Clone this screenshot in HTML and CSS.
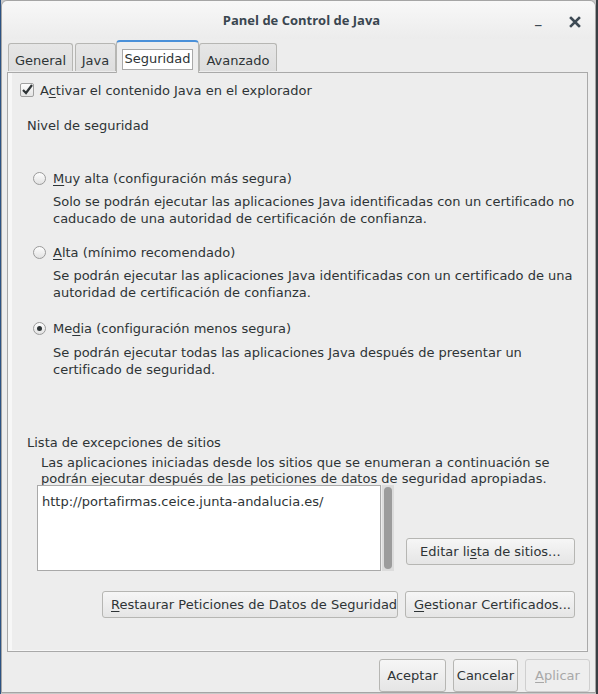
FILE: index.html
```html
<!DOCTYPE html>
<html lang="es">
<head>
<meta charset="utf-8">
<title>Panel de Control de Java</title>
<link rel="stylesheet" href="styles.css">
</head>
<body>
<div class="window">
  <div class="titlebar">
    <span class="title">Panel de Control de Java</span>
    <span class="wbtn min">_</span>
    <span class="wbtn close">
      <svg width="12" height="12" viewBox="0 0 12 12"><path d="M2 2 L10 10 M10 2 L2 10" stroke="#3d4a54" stroke-width="2.6" stroke-linecap="square"/></svg>
    </span>
  </div>
  <div class="body">
    <div class="tabs">
      <div class="tab t-general">General</div>
      <div class="tab t-java">Java</div>
      <div class="tab t-seg selected"><span class="focus">Seguridad</span></div>
      <div class="tab t-av">Avanzado</div>
    </div>
    <div class="panel">
      <div class="check-row">
        <span class="checkbox">
          <svg width="12" height="12" viewBox="0 0 12 12"><path d="M2 6 L5 9 L11 1" fill="none" stroke="#2e3436" stroke-width="2.2"/></svg>
        </span>
        <span>A<u>c</u>tivar el contenido Java en el explorador</span>
      </div>
      <div class="section-label">Nivel de seguridad</div>
      <div class="level first">
        <div class="radio-row"><span class="radio"></span><span><u>M</u>uy alta (configuración más segura)</span></div>
        <p class="desc">Solo se podrán ejecutar las aplicaciones Java identificadas con un certificado no caducado de una autoridad de certificación de confianza.</p>
      </div>
      <div class="level">
        <div class="radio-row"><span class="radio"></span><span><u>A</u>lta (mínimo recomendado)</span></div>
        <p class="desc">Se podrán ejecutar las aplicaciones Java identificadas con un certificado de una autoridad de certificación de confianza.</p>
      </div>
      <div class="level third">
        <div class="radio-row"><span class="radio checked"></span><span>Me<u>d</u>ia (configuración menos segura)</span></div>
        <p class="desc">Se podrán ejecutar todas las aplicaciones Java después de presentar un certificado de seguridad.</p>
      </div>
      <div class="section-label exc">Lista de excepciones de sitios</div>
      <p class="exc-desc">Las aplicaciones iniciadas desde los sitios que se enumeran a continuación se podrán ejecutar después de las peticiones de datos de seguridad apropiadas.</p>
      <div class="list-row">
        <div class="listbox">http://portafirmas.ceice.junta-andalucia.es/</div>
        <div class="scrollbar"><div class="thumb"></div></div>
        <button class="btn edit">Editar li<u>s</u>ta de sitios...</button>
      </div>
      <div class="actions">
        <button class="btn restore"><u>R</u>estaurar Peticiones de Datos de Seguridad</button>
        <button class="btn certs"><u>G</u>estionar Certificados...</button>
      </div>
    </div>
    <div class="footer">
      <button class="btn small b-ok">Aceptar</button>
      <button class="btn small">Cancelar</button>
      <button class="btn small disabled"><u>A</u>plicar</button>
    </div>
  </div>
</div>
</body>
</html>
```
FILE: styles.css
```css
* { box-sizing: border-box; }
html, body { margin: 0; padding: 0; }
body {
  width: 598px;
  height: 694px;
  background: linear-gradient(90deg, #2c5282 0, #2c5282 1px, #c8c8c8 1px, #c8c8c8 596px, #3a3f44 596px);
  font-family: "DejaVu Sans", sans-serif;
  font-size: 12px;
  color: #2e3436;
  overflow: hidden;
}
u { text-decoration: underline; text-underline-offset: 2px; }

.window {
  margin-left: 1px;
  width: 595px;
  height: 693px;
  background: #ededed;
  border: 1px solid #a5a5a5;
  border-radius: 6px 6px 0 0;
  display: flex;
  flex-direction: column;
}

.titlebar {
  height: 38px;
  flex: none;
  display: flex;
  align-items: center;
  justify-content: center;
  position: relative;
  background: linear-gradient(#f8f8f8, #ececec);
  border-radius: 6px 6px 0 0;
}
.title {
  font-family: "Open Sans", sans-serif;
  font-weight: 700;
  font-size: 13px;
  color: #3a4650;
  margin-left: 6px;
}
.wbtn {
  position: absolute;
  color: #3d4a54;
  font-weight: 700;
}
.wbtn.min { left: 533px; top: 10px; font-size: 13px; }
.wbtn.close { left: 567px; top: 15px; line-height: 0; }

.body {
  flex: 1;
  display: flex;
  flex-direction: column;
  padding: 1px 7px 0 5px;
}

.tabs {
  display: flex;
  align-items: flex-end;
  height: 32px;
  position: relative;
  z-index: 2;
}
.tab {
  height: 28px;
  border: 1px solid #b6b6b3;
  border-bottom: none;
  border-radius: 3px 3px 0 0;
  background: linear-gradient(#e6e6e6, #dedede);
  display: flex;
  align-items: center;
  justify-content: center;
  padding-top: 5px;
  font-size: 13px;
  margin-bottom: 1px;
}
.t-general { width: 65px; margin-left: 1px; }
.t-java { width: 41px; margin-left: 2px; }
.t-seg { width: 83px; }
.t-av { width: 78px; }
.tab.selected {
  height: 33px;
  margin-bottom: -1px;
  background: #ededed;
  border-top: 2px solid #4a90d9;
  padding-top: 3px;
  border-radius: 4px 4px 0 0;
}
.focus {
  border: 1px solid #a9a9a9;
  padding: 1px 1px 2px;
  background: #fff;
  line-height: 16px;
}

.panel {
  height: 580px;
  flex: none;
  border: 1px solid #a9a9a9;
  box-shadow: inset 4px 0 0 #f7f7f7, inset 0 -1px 0 #f7f7f7;
  background: #ededed;
  padding: 7px 12px 0 12px;
  display: flex;
  flex-direction: column;
  position: relative;
  z-index: 1;
}

.check-row {
  display: flex;
  align-items: center;
  gap: 6px;
  font-size: 13px;
  height: 20px;
}
.checkbox {
  width: 14px;
  height: 14px;
  border: 1px solid #a0a0a0;
  border-radius: 2px;
  background: linear-gradient(#fdfdfd, #e4e4e4);
  display: flex;
  align-items: center;
  justify-content: center;
}

.section-label {
  font-size: 13px;
  margin: 17px 0 0 7px;
  line-height: 18px;
}
.section-label.exc { margin-top: 56px; }

.level { margin: 16px 0 0 13px; }
.level.first { margin-top: 34px; }
.level.third { margin-top: 18px; }
.radio-row {
  display: flex;
  align-items: center;
  gap: 7px;
  font-size: 13px;
  height: 18px;
}
.radio {
  width: 13px;
  height: 13px;
  border-radius: 50%;
  border: 1px solid #9a9a9a;
  background: linear-gradient(#fdfdfd, #e2e2e2);
  position: relative;
  flex: none;
}
.radio.checked::after {
  content: "";
  position: absolute;
  left: 3px;
  top: 3px;
  width: 5px;
  height: 5px;
  border-radius: 50%;
  background: #2e3436;
}
.desc {
  margin: 6px 0 0 20px;
  font-size: 13px;
  line-height: 17px;
}
.level.third .desc { margin-top: 7px; }

.exc-desc {
  margin: 3px 0 0 21px;
  font-size: 13px;
  line-height: 16px;
}

.list-row {
  display: flex;
  align-items: flex-end;
  margin: -2px 0 0 17px;
  position: relative;
}
.listbox {
  width: 345px;
  height: 86px;
  background: #fff;
  border: 1px solid #a9a9a9;
  font-size: 13px;
  padding: 8px 4px;
}
.scrollbar {
  width: 12px;
  height: 86px;
  margin-left: 1px;
  background: #dcdcdc;
  padding: 2px 2px;
  align-self: flex-start;
}
.thumb {
  height: 82px;
  border-radius: 4px;
  background: #9c9c9c;
}

.btn {
  font-family: "DejaVu Sans", sans-serif;
  font-size: 13px;
  color: #2e3436;
  border: 1px solid #b6b6b3;
  border-radius: 3px;
  background: linear-gradient(#f6f6f6, #e5e5e5);
  height: 27px;
  padding: 0 8px;
  white-space: nowrap;
}
.btn.edit { width: 170px; margin: 0 0 6px 12px; }

.actions {
  display: flex;
  justify-content: flex-end;
  gap: 7px;
  margin: 20px 0 0 0;
}
.btn.restore { width: 296px; }
.btn.certs { width: 170px; }

.footer {
  display: flex;
  justify-content: flex-end;
  gap: 7px;
  padding: 7px 0 0;
  margin-right: -2px;
}
.btn.small { width: 65px; height: 33px; padding: 0; }
.btn.b-ok { width: 67px; }
.btn.disabled { color: #a8a8a8; background: #eeeeee; border-color: #cfcfcf; }
```
